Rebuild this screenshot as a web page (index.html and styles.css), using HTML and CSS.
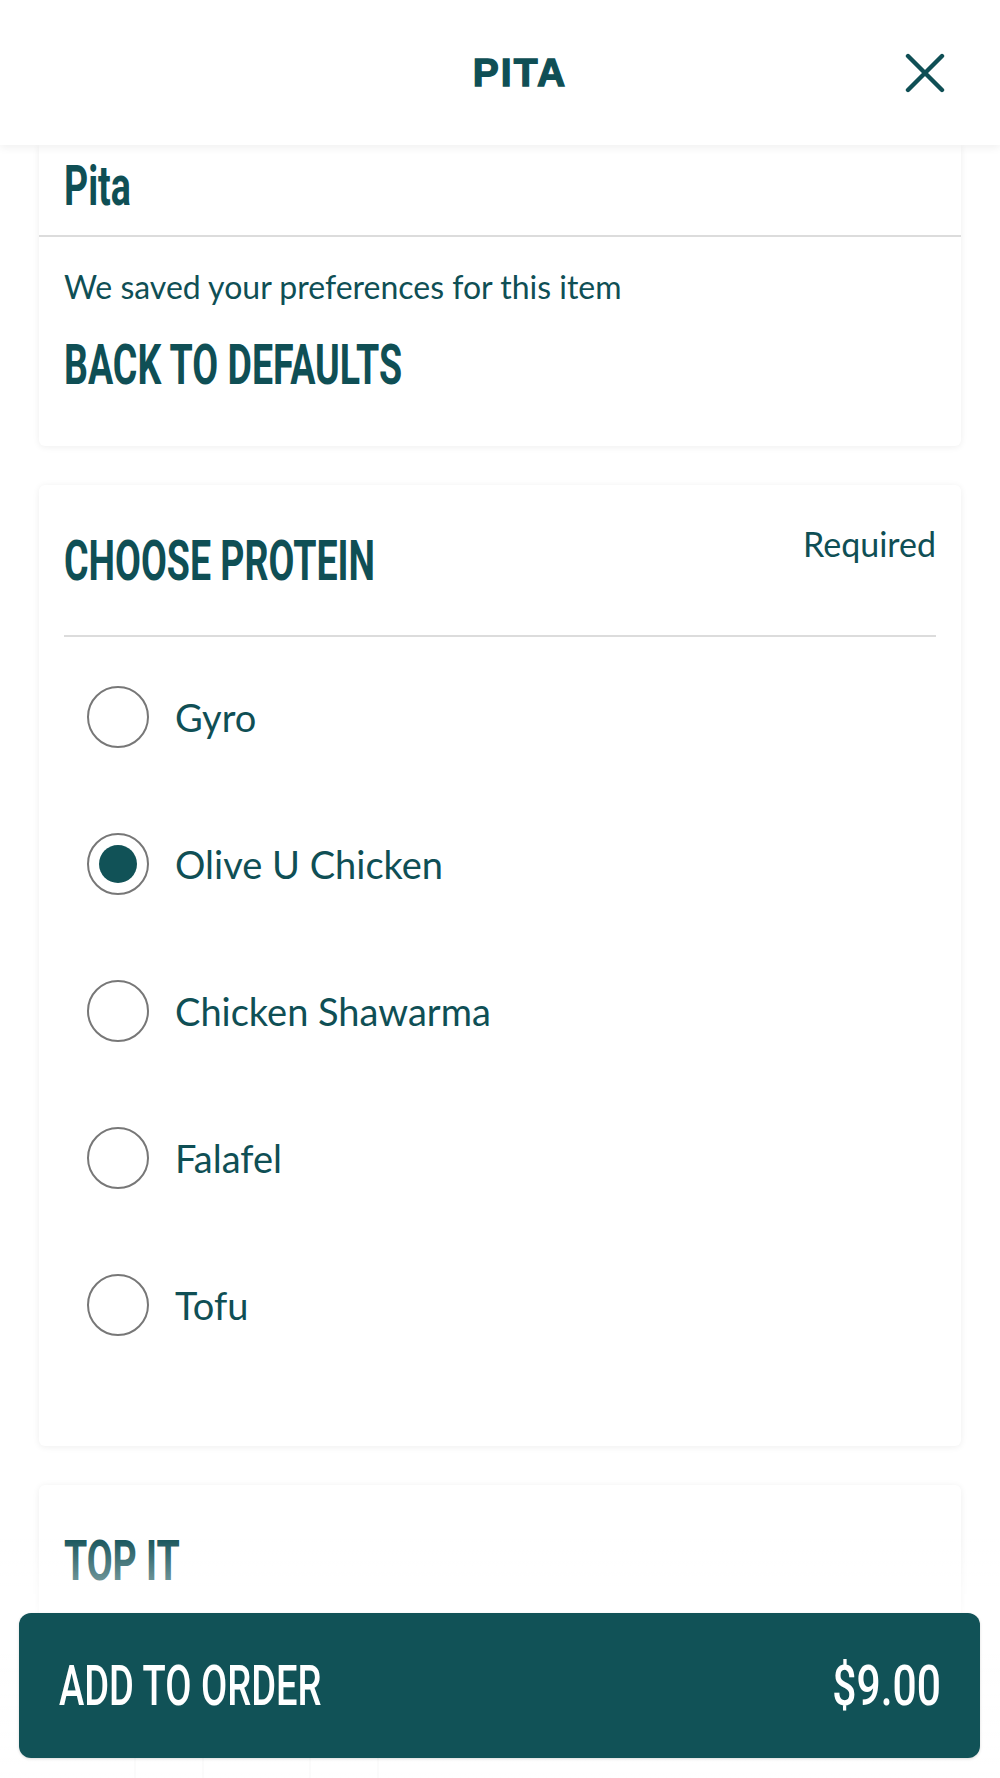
FILE: index.html
```html
<!DOCTYPE html>
<html lang="en">
<head>
<meta charset="utf-8">
<title>Pita</title>
<link rel="stylesheet" href="styles.css">
</head>
<body>
<header class="topbar">
  <div class="topbar-title">PITA</div>
  <button class="close" aria-label="Close">
    <svg viewBox="0 0 40 40" width="40" height="40"><path d="M3 3 L37 37 M37 3 L3 37" fill="none" stroke="#0f4f55" stroke-width="4.4" stroke-linecap="round"/></svg>
  </button>
</header>

<main class="content">
  <section class="card card-first">
    <div class="card-head">
      <h1 class="cond heading"><span>Pita</span></h1>
    </div>
    <div class="card-body">
      <p class="saved">We saved your preferences for this item</p>
      <button class="cond heading defaults"><span>BACK TO DEFAULTS</span></button>
    </div>
  </section>

  <section class="card group">
    <div class="group-head">
      <h2 class="cond heading group-title"><span>CHOOSE PROTEIN</span></h2>
      <span class="required">Required</span>
    </div>
    <ul class="options">
      <li class="option"><span class="radio"></span><span class="option-label">Gyro</span></li>
      <li class="option"><span class="radio checked"></span><span class="option-label">Olive U Chicken</span></li>
      <li class="option"><span class="radio"></span><span class="option-label">Chicken Shawarma</span></li>
      <li class="option"><span class="radio"></span><span class="option-label">Falafel</span></li>
      <li class="option"><span class="radio"></span><span class="option-label">Tofu</span></li>
    </ul>
  </section>

  <section class="card group group-last">
    <div class="group-head">
      <h2 class="cond heading group-title"><span>TOP IT</span></h2>
    </div>
    <div class="peek" aria-hidden="true">
      <span class="peek-box"></span>
      <span class="peek-box"></span>
      <span class="peek-bar"></span>
    </div>
  </section>
</main>

<div class="fade"></div>

<button class="add-btn">
  <span class="cond add-label"><span>ADD TO ORDER</span></span>
  <span class="cond add-price"><span>$9.00</span></span>
</button>
</body>
</html>
```
FILE: styles.css
```css
* { box-sizing: border-box; }

html, body {
  margin: 0;
  padding: 0;
  background: #ffffff;
}

body {
  font-family: "Lato", "Noto Sans", sans-serif;
  color: #0f4f55;
}

/* condensed display face */
.cond {
  font-family: "Roboto", "Liberation Sans", sans-serif;
  font-weight: 700;
  white-space: nowrap;
}
.cond > span {
  display: inline-block;
  transform: scaleX(0.67);
  transform-origin: left center;
}

.heading {
  margin: 0;
  font-size: 56px;
  line-height: 56px;
  color: #0f4f55;
}

/* top bar */
.topbar {
  position: relative;
  z-index: 3;
  height: 145px;
  background: #ffffff;
  display: flex;
  align-items: center;
  padding: 0 55px 0 135px;
  box-shadow: 0 3px 8px rgba(0, 0, 0, 0.06);
}
.topbar-title {
  flex: 1;
  text-align: center;
  font-family: "Liberation Sans", "Arial", sans-serif;
  font-weight: 700;
  font-size: 39px;
  letter-spacing: 2.2px;
  -webkit-text-stroke: 1.3px #0f4f55;
  color: #0f4f55;
}
.close {
  width: 40px;
  height: 40px;
  padding: 0;
  border: 0;
  background: none;
  display: block;
}
.close svg { display: block; }

/* content */
.content {
  padding: 0 39px;
}
.card {
  background: #ffffff;
  border-radius: 6px;
  box-shadow: 0 1px 7px rgba(0, 0, 0, 0.07);
}
.card-first {
  border-top-left-radius: 0;
  border-top-right-radius: 0;
}
.card-head {
  padding: 13px 25px 21px;
  border-bottom: 2px solid #dcdcdc;
}
.card-body {
  padding: 30px 25px 53px;
}
.saved {
  margin: 0 0 30px;
  font-size: 32px;
  line-height: 40px;
}
.defaults {
  display: block;
  padding: 0;
  border: 0;
  background: none;
  text-align: left;
}

.group {
  margin-top: 39px;
  padding: 0 25px 68px 25px;
}
.group-head {
  display: flex;
  justify-content: space-between;
  align-items: flex-start;
  padding: 39px 0 46px;
  border-bottom: 2px solid #dcdcdc;
}
.group-title {
  margin-top: 9px;
}
.required {
  font-size: 34px;
  line-height: 40px;
  color: #0f4f55;
}

.options {
  list-style: none;
  margin: 0;
  padding: 6px 0 0 23px;
}
.option {
  height: 147px;
  display: flex;
  align-items: center;
  gap: 26px;
}
.radio {
  position: relative;
  flex: none;
  width: 62px;
  height: 62px;
  border: 2px solid #777777;
  border-radius: 50%;
  background: #ffffff;
}
.radio.checked::after {
  content: "";
  position: absolute;
  left: 10px;
  top: 10px;
  width: 38px;
  height: 38px;
  border-radius: 50%;
  background: #115257;
}
.option-label {
  font-size: 38px;
  line-height: 44px;
  color: #0f4f55;
}

/* faint items of the next group, seen under the button */
.peek {
  display: flex;
  align-items: flex-start;
  gap: 105px;
  padding: 105px 0 0 70px;
}
.peek-box {
  width: 70px;
  height: 60px;
  border: 2px solid #999999;
  border-radius: 10px;
}
.peek-bar {
  width: 105px;
  height: 10px;
  margin-left: -65px;
  background: #aaaaaa;
  border-radius: 3px;
}

/* bottom fade over scrolled content */
.fade {
  position: fixed;
  left: 0;
  right: 0;
  bottom: 0;
  height: 245px;
  z-index: 1;
  pointer-events: none;
  background: linear-gradient(to bottom,
    rgba(255, 255, 255, 0) 0px,
    rgba(255, 255, 255, 0.45) 55px,
    rgba(255, 255, 255, 0.92) 115px,
    rgba(255, 255, 255, 0.96) 100%);
}

/* add to order */
.add-btn {
  position: fixed;
  z-index: 2;
  left: 19px;
  right: 20px;
  bottom: 20px;
  height: 145px;
  border: 0;
  border-radius: 12px;
  background: #115257;
  color: #ffffff;
  display: flex;
  justify-content: space-between;
  align-items: center;
  padding: 0 39px 0 40px;
  box-shadow: 0 1px 3px rgba(0, 0, 0, 0.15);
  font-size: 56px;
  line-height: 56px;
}
.add-label, .add-price {
  color: #ffffff;
  font-weight: 500;
}
.add-label > span {
  transform: scaleX(0.68);
}
.add-price > span {
  transform: scaleX(0.76);
  transform-origin: right center;
}
```
